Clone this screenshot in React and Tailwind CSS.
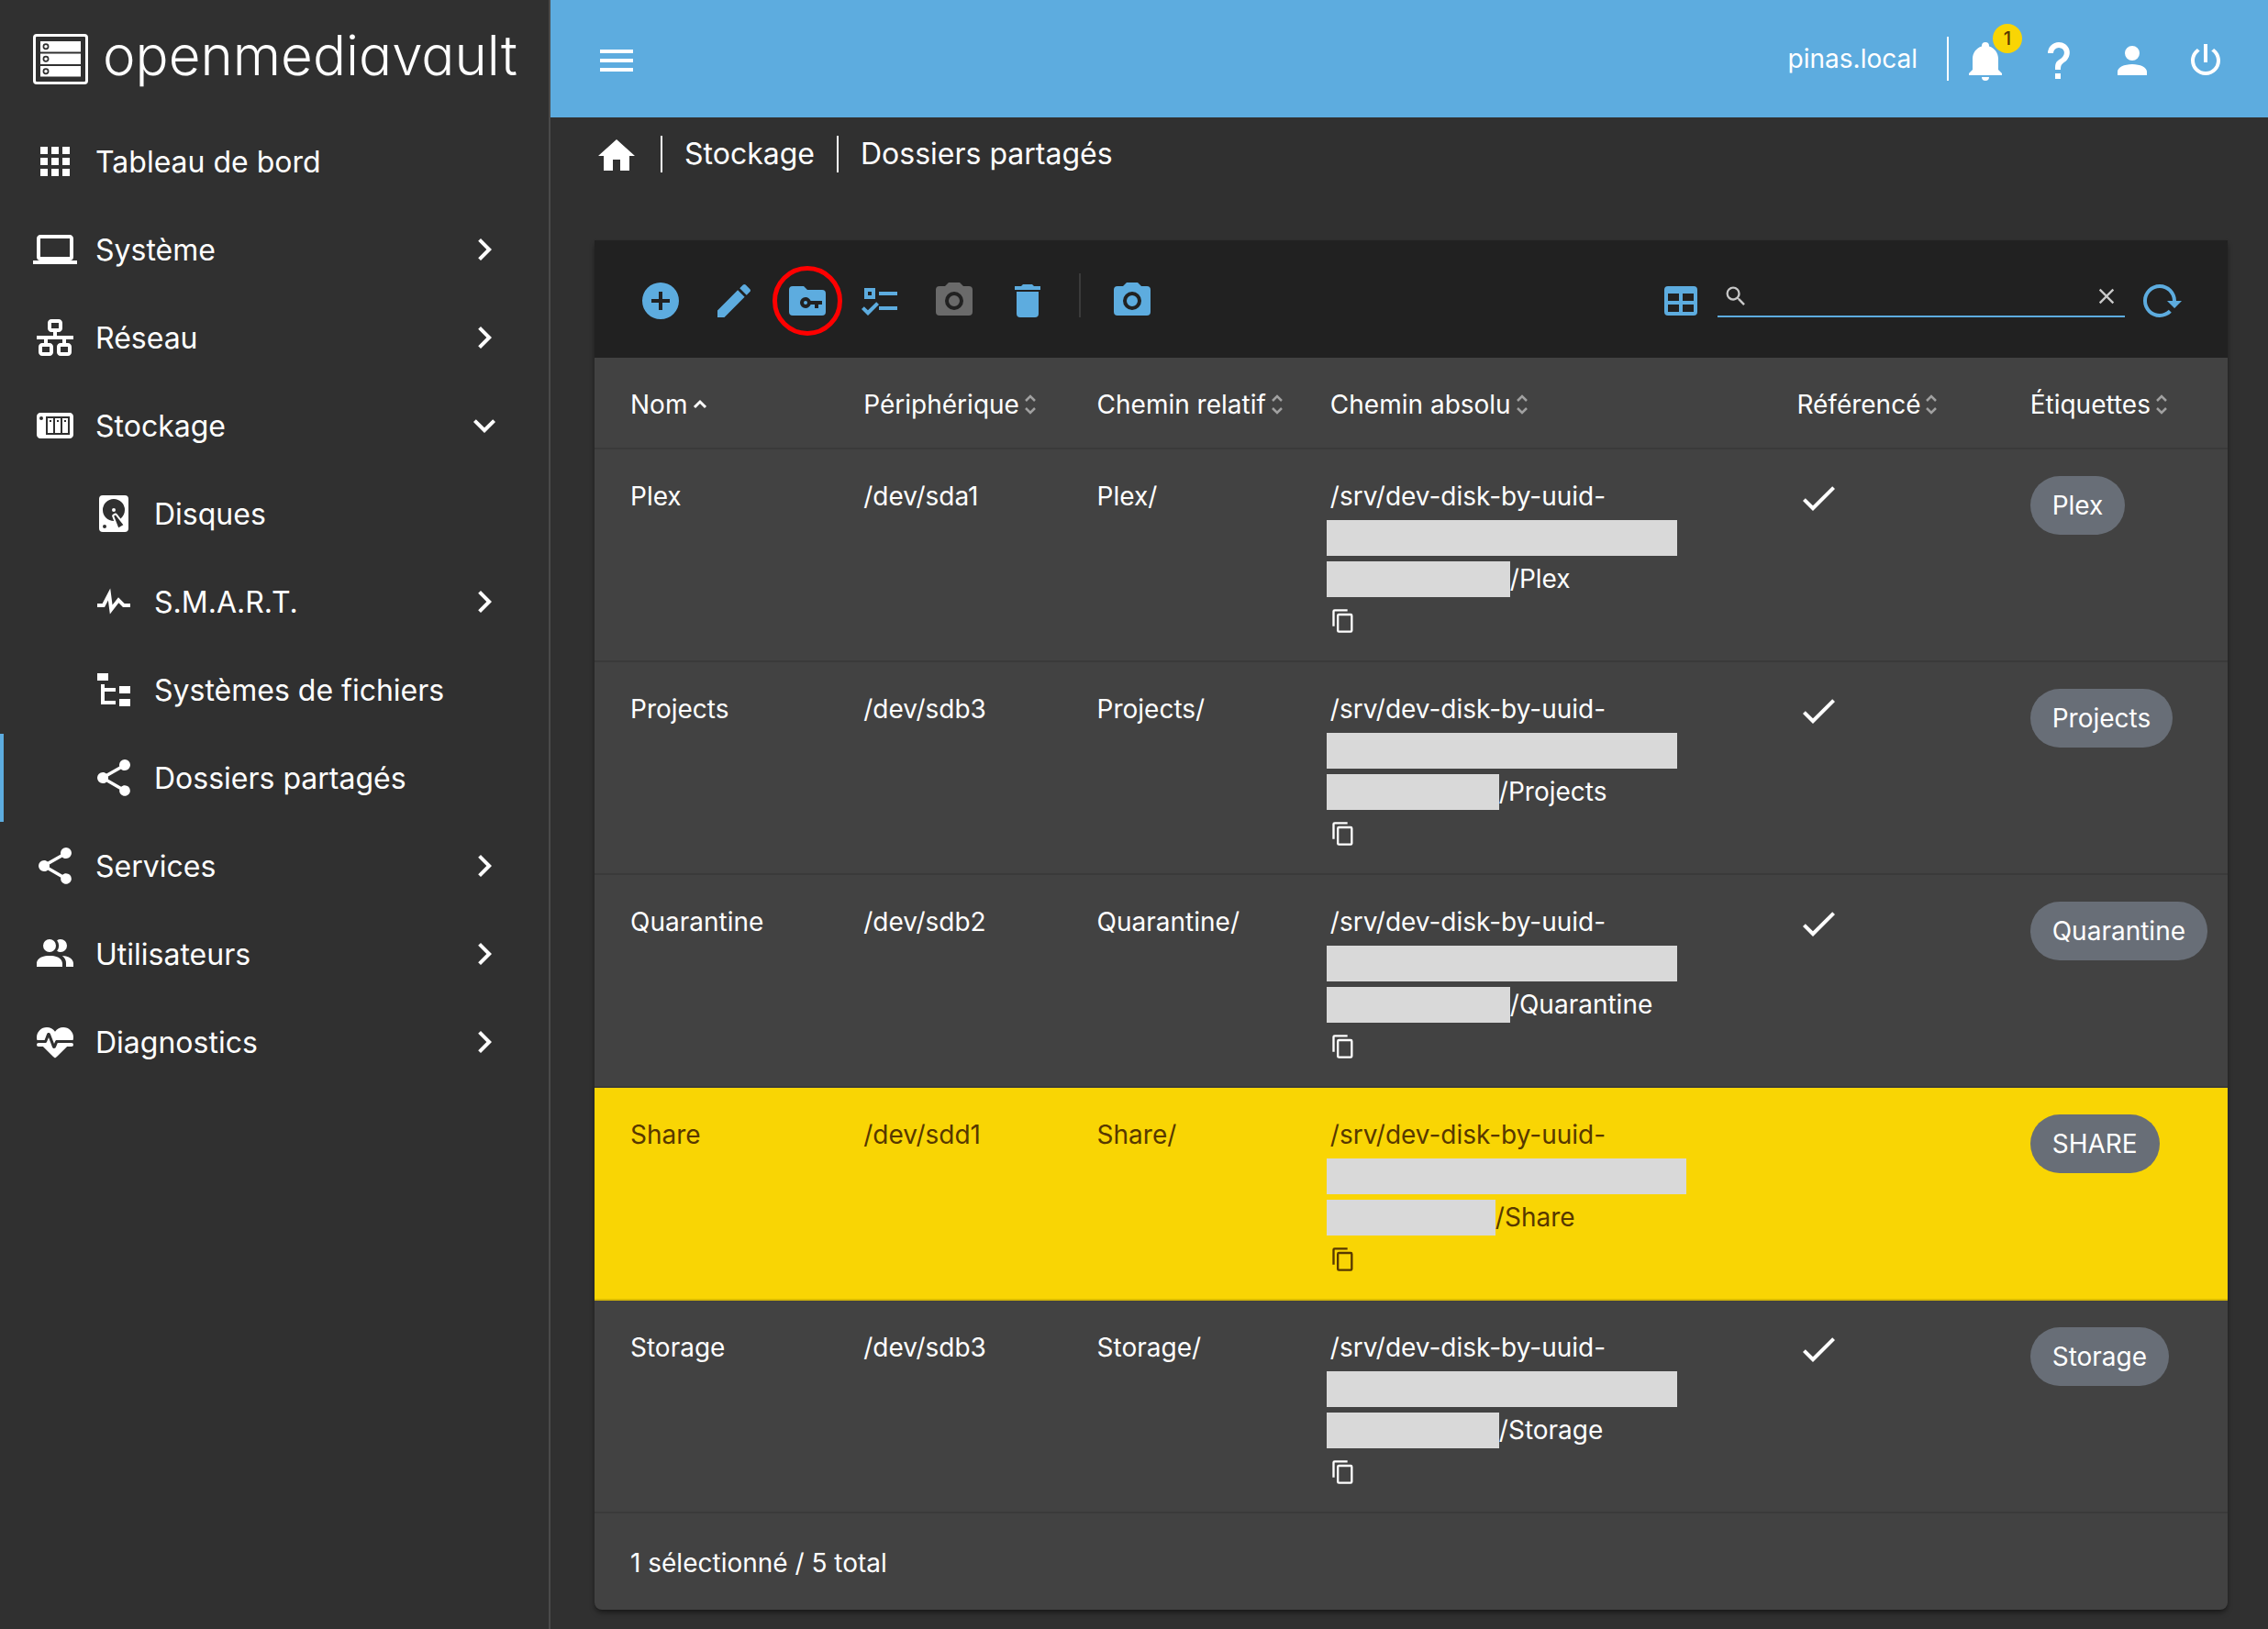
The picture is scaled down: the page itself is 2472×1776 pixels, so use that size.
import React, { useState } from 'react';

const icons = {
  apps: 'M16,20H20V16H16M16,14H20V10H16M10,8H14V4H10M16,8H20V4H16M10,14H14V10H10M4,14H8V10H4M4,20H8V16H4M10,20H14V16H10M4,8H8V4H4V8Z',
  laptop: 'M4,6H20V16H4M20,18A2,2 0 0,0 22,16V6C22,4.89 21.1,4 20,4H4C2.89,4 2,4.89 2,6V16A2,2 0 0,0 4,18H0V20H24V18H20Z',
  lan: 'M10,2C8.89,2 8,2.89 8,4V7C8,8.11 8.89,9 10,9H11V11H2V13H6V15H5C3.89,15 3,15.89 3,17V20C3,21.11 3.89,22 5,22H9C10.11,22 11,21.11 11,20V17C11,15.89 10.11,15 9,15H8V13H16V15H15C13.89,15 13,15.89 13,17V20C13,21.11 13.89,22 15,22H19C20.11,22 21,21.11 21,20V17C21,15.89 20.11,15 19,15H18V13H22V11H13V9H14C15.11,9 16,8.11 16,7V4C16,2.89 15.11,2 14,2H10M10,4H14V7H10V4M5,17H9V20H5V17M15,17H19V20H15V17Z',
  nas: 'M4,5C2.89,5 2,5.89 2,7V17C2,18.11 2.89,19 4,19H20C21.11,19 22,18.11 22,17V7C22,5.89 21.11,5 20,5H4M4.5,7A1,1 0 0,1 5.5,8A1,1 0 0,1 4.5,9A1,1 0 0,1 3.5,8A1,1 0 0,1 4.5,7M7,7H20V17H7V7M8,8V16H11V8H8M12,8V16H15V8H12M16,8V16H19V8H16M9,9H10V10H9V9M13,9H14V10H13V9M17,9H18V10H17V9Z',
  harddisk: 'M6,2H18A2,2 0 0,1 20,4V20A2,2 0 0,1 18,22H6A2,2 0 0,1 4,20V4A2,2 0 0,1 6,2M12,4A6,6 0 0,0 6,10C6,13.31 8.69,16 12.1,16L11.22,13.77C10.95,13.29 11.11,12.68 11.59,12.4L12.45,11.9C12.93,11.63 13.54,11.79 13.82,12.27L15.74,14.69C17.12,13.59 18,11.9 18,10A6,6 0 0,0 12,4M12,9A1,1 0 0,1 13,10A1,1 0 0,1 12,11A1,1 0 0,1 11,10A1,1 0 0,1 12,9M7,18A1,1 0 0,0 6,19A1,1 0 0,0 7,20A1,1 0 0,0 8,19A1,1 0 0,0 7,18M12.09,13.27L14.58,19.58L17.17,18.08L12.95,12.77L12.09,13.27Z',
  pulse: 'M3,13H5.79L10.1,4.79L11.28,13.75L14.5,9.66L17.83,13H21V15H17L14.67,12.67L9.92,18.73L8.94,11.31L7,15H3V13Z',
  fileTree: 'M3,3H9V7H3V3M15,10H21V14H15V10M15,17H21V21H15V17M13,13H7V18H13V20H5V9H7V11H13V13Z',
  share: 'M18,16.08C17.24,16.08 16.56,16.38 16.04,16.85L8.91,12.7C8.96,12.47 9,12.24 9,12C9,11.76 8.96,11.53 8.91,11.3L15.96,7.19C16.5,7.69 17.21,8 18,8A3,3 0 0,0 21,5A3,3 0 0,0 18,2A3,3 0 0,0 15,5C15,5.24 15.04,5.47 15.09,5.7L8.04,9.81C7.5,9.31 6.79,9 6,9A3,3 0 0,0 3,12A3,3 0 0,0 6,15C6.79,15 7.5,14.69 8.04,14.19L15.16,18.34C15.11,18.55 15.08,18.77 15.08,19C15.08,20.61 16.39,21.91 18,21.91C19.61,21.91 20.92,20.61 20.92,19A2.92,2.92 0 0,0 18,16.08Z',
  users: 'M16 17V19H2V17S2 13 9 13 16 17 16 17M12.5 7.5A3.5 3.5 0 1 0 9 11A3.5 3.5 0 0 0 12.5 7.5M15.94 13A5.32 5.32 0 0 1 18 17V19H22V17S22 13.37 15.94 13M15 4A3.39 3.39 0 0 0 13.07 4.59A5 5 0 0 1 13.07 10.41A3.39 3.39 0 0 0 15 11A3.5 3.5 0 0 0 15 4Z',
  heartPulse: 'M7.5,4A5.5,5.5 0 0,0 2,9.5C2,10 2.09,10.5 2.22,11H6.3L7.57,7.63C7.87,6.83 9.05,6.75 9.43,7.63L11.5,13L12.09,11.58C12.22,11.25 12.57,11 13,11H21.78C21.91,10.5 22,10 22,9.5A5.5,5.5 0 0,0 16.5,4C14.64,4 13,4.93 12,6.34C11,4.93 9.36,4 7.5,4V4M3,12.5A1,1 0 0,0 2,13.5A1,1 0 0,0 3,14.5H5.44L11,20C12,20.9 12,20.9 13,20L18.56,14.5H21A1,1 0 0,0 22,13.5A1,1 0 0,0 21,12.5H13.4L12.47,14.8C12.07,15.81 10.92,15.67 10.55,14.83L8.5,9.5L7.54,11.83C7.39,12.21 7.05,12.5 6.6,12.5H3Z',
  chevronRight: 'M8.59,16.58L13.17,12L8.59,7.41L10,6L16,12L10,18L8.59,16.58Z',
  chevronDown: 'M7.41,8.58L12,13.17L16.59,8.58L18,10L12,16L6,10L7.41,8.58Z',
  menu: 'M3,6H21V8H3V6M3,11H21V13H3V11M3,16H21V18H3V16Z',
  home: 'M10,20V14H14V20H19V12H22L12,3L2,12H5V20H10Z',
  bell: 'M21,19V20H3V19L5,17V11C5,7.9 7.03,5.17 10,4.29C10,4.19 10,4.1 10,4A2,2 0 0,1 12,2A2,2 0 0,1 14,4C14,4.1 14,4.19 14,4.29C16.97,5.17 19,7.9 19,11V17L21,19M14,21A2,2 0 0,1 12,23A2,2 0 0,1 10,21',
  help: 'M10,19H13V22H10V19M12,2C17.35,2.22 19.68,7.62 16.5,11.67C15.67,12.67 14.33,13.33 13.67,14.17C13,15 13,16 13,17H10C10,15.33 10,13.92 10.67,12.92C11.33,11.92 12.67,11.33 13.5,10.67C15.92,8.43 15.32,5.26 12,5A3,3 0 0,0 9,8H6A6,6 0 0,1 12,2Z',
  account: 'M12,4A4,4 0 0,1 16,8A4,4 0 0,1 12,12A4,4 0 0,1 8,8A4,4 0 0,1 12,4M12,14C16.42,14 20,15.79 20,18V20H4V18C4,15.79 7.58,14 12,14Z',
  power: 'M16.56,5.44L15.11,6.89C16.84,7.94 18,9.83 18,12A6,6 0 0,1 12,18A6,6 0 0,1 6,12C6,9.83 7.16,7.94 8.88,6.88L7.44,5.44C5.36,6.88 4,9.28 4,12A8,8 0 0,0 12,20A8,8 0 0,0 20,12C20,9.28 18.64,6.88 16.56,5.44M13,3H11V13H13',
  plus: 'M17,13H13V17H11V13H7V11H11V7H13V11H17M12,2A10,10 0 0,0 2,12A10,10 0 0,0 12,22A10,10 0 0,0 22,12A10,10 0 0,0 12,2Z',
  pencil: 'M20.71,7.04C21.1,6.65 21.1,6 20.71,5.63L18.37,3.29C18,2.9 17.35,2.9 16.96,3.29L15.12,5.12L18.87,8.87M3,17.25V21H6.75L17.81,9.93L14.06,6.18L3,17.25Z',
  folderKey: 'M20,6H12L10,4H4A2,2 0 0,0 2,6V18A2,2 0 0,0 4,20H20A2,2 0 0,0 22,18V8A2,2 0 0,0 20,6ZM20,14H18V16H16V14H13.82C13.4,15.16 12.3,16 11,16A3,3 0 0,1 11,10C12.3,10 13.4,10.84 13.82,12H20V14ZM11,12A1,1 0 0,0 11,14A1,1 0 0,0 11,12Z',
  listChecks: 'M3,5H9V11H3V5M5,7V9H7V7H5M11,7H21V9H11V7M11,15H21V17H11V15M5,20L1.5,16.5L2.91,15.09L5,17.17L9.59,12.59L11,14L5,20Z',
  camera: 'M4,4H7L9,2H15L17,4H20A2,2 0 0,1 22,6V18A2,2 0 0,1 20,20H4A2,2 0 0,1 2,18V6A2,2 0 0,1 4,4M12,7A5,5 0 0,0 7,12A5,5 0 0,0 12,17A5,5 0 0,0 17,12A5,5 0 0,0 12,7M12,9A3,3 0 0,1 15,12A3,3 0 0,1 12,15A3,3 0 0,1 9,12A3,3 0 0,1 12,9Z',
  trash: 'M19,4H15.5L14.5,3H9.5L8.5,4H5V6H19M6,19A2,2 0 0,0 8,21H16A2,2 0 0,0 18,19V7H6V19Z',
  table: 'M5,4H19A2,2 0 0,1 21,6V18A2,2 0 0,1 19,20H5A2,2 0 0,1 3,18V6A2,2 0 0,1 5,4M5,8V12H11V8H5M13,8V12H19V8H13M5,14V18H11V14H5M13,14V18H19V14H13Z',
  magnify: 'M9.5,3A6.5,6.5 0 0,1 16,9.5C16,11.11 15.41,12.59 14.44,13.73L14.71,14H15.5L20.5,19L19,20.5L14,15.5V14.71L13.73,14.44C12.59,15.41 11.11,16 9.5,16A6.5,6.5 0 0,1 3,9.5A6.5,6.5 0 0,1 9.5,3M9.5,5C7,5 5,7 5,9.5C5,12 7,14 9.5,14C12,14 14,12 14,9.5C14,7 12,5 9.5,5Z',
  close: 'M19,6.41L17.59,5L12,10.59L6.41,5L5,6.41L10.59,12L5,17.59L6.41,19L12,13.41L17.59,19L19,17.59L13.41,12L19,6.41Z',
  reload: 'M2 12C2 16.97 6.03 21 11 21C13.39 21 15.68 20.06 17.4 18.4L15.9 16.9C14.63 18.25 12.86 19 11 19C4.76 19 1.64 11.46 6.05 7.05C10.46 2.64 18 5.77 18 12H15L19 16H19.1L23 12H20C20 7.03 15.97 3 11 3C6.03 3 2 7.03 2 12Z',
  check: 'M21,7L9,19L3.5,13.5L4.91,12.09L9,16.17L19.59,5.59L21,7Z',
  copy: 'M19,21H8V7H19M19,5H8A2,2 0 0,0 6,7V21A2,2 0 0,0 8,23H19A2,2 0 0,0 21,21V7A2,2 0 0,0 19,5M16,1H4A2,2 0 0,0 2,3V17H4V3H16V1Z',
};

const menu = [
  { label: 'Tableau de bord', icon: 'apps' },
  { label: 'Système', icon: 'laptop', arrow: 'chevronRight' },
  { label: 'Réseau', icon: 'lan', arrow: 'chevronRight' },
  { label: 'Stockage', icon: 'nas', arrow: 'chevronDown' },
  { label: 'Disques', icon: 'harddisk', sub: true },
  { label: 'S.M.A.R.T.', icon: 'pulse', sub: true, arrow: 'chevronRight' },
  { label: 'Systèmes de fichiers', icon: 'fileTree', sub: true },
  { label: 'Dossiers partagés', icon: 'share', sub: true, active: true },
  { label: 'Services', icon: 'share', arrow: 'chevronRight' },
  { label: 'Utilisateurs', icon: 'users', arrow: 'chevronRight' },
  { label: 'Diagnostics', icon: 'heartPulse', arrow: 'chevronRight' },
];

const columns = ['Nom', 'Périphérique', 'Chemin relatif', 'Chemin absolu', 'Référencé', 'Étiquettes'];

// long / short: widths of the two masked parts of the uuid
const folders = [
  { name: 'Plex', device: '/dev/sda1', tag: 'Plex', referenced: true, long: 'w-[382px]', short: 'w-[200px]' },
  { name: 'Projects', device: '/dev/sdb3', tag: 'Projects', referenced: true, long: 'w-[382px]', short: 'w-[188px]' },
  { name: 'Quarantine', device: '/dev/sdb2', tag: 'Quarantine', referenced: true, long: 'w-[382px]', short: 'w-[200px]' },
  { name: 'Share', device: '/dev/sdd1', tag: 'SHARE', referenced: false, long: 'w-[392px]', short: 'w-[184px]' },
  { name: 'Storage', device: '/dev/sdb3', tag: 'Storage', referenced: true, long: 'w-[382px]', short: 'w-[188px]' },
];

const Icon = ({ name, className = 'size-12' }) => (
  <svg viewBox="0 0 24 24" fill="currentColor" fillRule="evenodd" aria-hidden="true" className={`shrink-0 ${className}`}>
    <path d={icons[name]} />
  </svg>
);

const IconButton = ({ icon, label, children, ...props }) => (
  <button type="button" aria-label={label} className="relative shrink-0 disabled:text-[#6a6a6a]" {...props}>
    <Icon name={icon} />
    {children}
  </button>
);

const Logo = () => (
  <div className="flex h-32 items-center gap-4 pl-9">
    <svg viewBox="0 0 60 55" className="h-[55px] w-[60px] shrink-0" aria-hidden="true">
      <rect x="1.5" y="1.5" width="57" height="52" rx="2.5" fill="none" stroke="#fff" strokeWidth="3" />
      {[8, 21.5, 35].map((y) => (
        <g key={y}>
          <rect x="8" y={y} width="44" height="11.5" fill="#fff" />
          <circle cx="14" cy={y + 5.75} r="2.6" fill="none" stroke="#303030" strokeWidth="1.7" />
        </g>
      ))}
    </svg>
    <span className="pb-2 text-[60px] leading-[60px] font-light [font-feature-settings:'cv11']">openmediavault</span>
  </div>
);

const Sidebar = () => (
  <aside className="w-[600px] shrink-0 border-r-2 border-[#4a4a4a]">
    <Logo />
    <nav>
      {menu.map((item) => (
        <a
          key={item.label}
          href="#"
          className={`flex h-24 items-center gap-5 border-l-4 pr-[46px] text-[32px] leading-10 ${
            item.sub ? 'pl-24' : 'pl-8'
          } ${item.active ? 'border-[#5dacdf]' : 'border-transparent'}`}
        >
          <Icon name={item.icon} />
          <span className="flex-1 pt-0.5">{item.label}</span>
          {item.arrow && <Icon name={item.arrow} />}
        </a>
      ))}
    </nav>
  </aside>
);

const Header = () => (
  <header className="flex h-32 items-center bg-[#5dacdf] pr-11 pl-12">
    <div className="mt-1 flex flex-1">
      <IconButton icon="menu" label="Menu" />
    </div>
    <span className="mr-8 text-[28px] leading-10">pinas.local</span>
    <span className="mr-4 h-12 w-0.5 bg-white" />
    <div className="mt-1 flex gap-8">
      <IconButton icon="bell" label="Notifications">
        <span className="absolute -top-4 -right-4 flex size-8 items-center justify-center rounded-full bg-[#f9d504] text-xl font-medium text-[#573800]">
          1
        </span>
      </IconButton>
      <IconButton icon="help" label="Aide" />
      <IconButton icon="account" label="Compte" />
      <IconButton icon="power" label="Arrêt" />
    </div>
  </header>
);

const Breadcrumb = () => (
  <nav className="flex h-12 items-center gap-6 text-[32px] leading-10">
    <a href="#" aria-label="Accueil" className="mt-1">
      <Icon name="home" />
    </a>
    <span className="h-10 w-0.5 bg-white" />
    <a href="#">Stockage</a>
    <span className="h-10 w-0.5 bg-white" />
    <a href="#">Dossiers partagés</a>
  </nav>
);

const Toolbar = () => {
  const [search, setSearch] = useState('');

  return (
    <div className="flex h-32 items-center justify-between bg-[#212121] px-12 pt-1 text-[#5dacdf]">
      <div className="flex items-center gap-8">
        <IconButton icon="plus" label="Créer" />
        <IconButton icon="pencil" label="Éditer" />
        <IconButton icon="folderKey" label="Permissions">
          <span className="absolute -inset-3.5 rounded-full border-[5px] border-[#ff0000]" />
        </IconButton>
        <IconButton icon="listChecks" label="ACL" />
        <IconButton icon="camera" label="Créer un instantané" disabled />
        <IconButton icon="trash" label="Supprimer" />
        <span className="mb-3 h-12 w-0.5 bg-[#3a3a3a]" />
        <IconButton icon="camera" label="Instantanés" />
      </div>
      <div className="flex items-center gap-4">
        <IconButton icon="table" label="Colonnes" />
        <div className="flex h-9 w-[444px] items-center border-b-2 border-[#5dacdf] px-1.5 pb-2 text-[#c8c8c8]">
          <Icon name="magnify" className="size-7" />
          <input
            type="text"
            aria-label="Rechercher"
            value={search}
            onChange={(e) => setSearch(e.target.value)}
            className="h-7 min-w-0 flex-1 px-2 text-[28px] outline-none"
          />
          <button type="button" aria-label="Effacer" onClick={() => setSearch('')}>
            <Icon name="close" className="size-7" />
          </button>
        </div>
        <IconButton icon="reload" label="Recharger" />
      </div>
    </div>
  );
};

const SortIcon = ({ sorted }) =>
  sorted ? (
    <svg viewBox="0 0 16 22" fill="none" stroke="currentColor" strokeWidth="3" className="h-[22px] w-4" aria-hidden="true">
      <path d="M2,14L8,8L14,14" />
    </svg>
  ) : (
    <svg viewBox="0 0 12 22" fill="none" stroke="#a0a0a0" strokeWidth="2.5" className="h-[22px] w-3" aria-hidden="true">
      <path d="M1,7L6,2L11,7M1,15L6,20L11,15" />
    </svg>
  );

const FolderRow = ({ folder, selected, onSelect }) => (
  <tr
    onClick={onSelect}
    className={`align-top [&>td]:border-b-2 [&>td]:border-black/12 [&>td]:pt-[29px] [&>td]:pb-[21px] [&>td]:pl-[39px] ${
      selected ? 'bg-[#f9d504] text-[#573800]' : ''
    }`}
  >
    <td>{folder.name}</td>
    <td>{folder.device}</td>
    <td>{folder.name}/</td>
    <td>
      <div>/srv/dev-disk-by-uuid-</div>
      <div className="-ml-1 flex h-[45px] items-center">
        <span className={`h-[39px] bg-[#d9d9d9] ${folder.long}`} />
      </div>
      <div className="-ml-1 flex h-[45px] items-center">
        <span className={`h-[39px] bg-[#d9d9d9] ${folder.short}`} />
        /{folder.name}
      </div>
      <button type="button" aria-label="Copier" className="flex h-[45px] items-center">
        <Icon name="copy" className="size-7" />
      </button>
    </td>
    <td>{folder.referenced && <Icon name="check" />}</td>
    <td>
      <span className="inline-flex h-16 items-center rounded-full bg-[#686e77] px-6 text-white">{folder.tag}</span>
    </td>
  </tr>
);

const App = () => {
  const [selected, setSelected] = useState('Share');

  return (
    <div className="flex min-h-screen bg-[#303030] font-['Inter',sans-serif] text-white">
      <Sidebar />
      <div className="min-w-0 flex-1">
        <Header />
        <main className="pt-4 pr-11 pb-5 pl-12">
          <Breadcrumb />
          <section className="mt-[70px] overflow-hidden rounded-b-lg bg-[#424242] shadow-md shadow-black/40">
            <Toolbar />
            <table className="w-full table-fixed border-separate border-spacing-0 text-[28px] leading-[45px]">
              <colgroup>
                {columns.map((column) => (
                  <col key={column} className={column === 'Chemin absolu' ? 'w-2/7' : ''} />
                ))}
              </colgroup>
              <thead>
                <tr>
                  {columns.map((column) => (
                    <th key={column} className="h-[100px] border-b-2 border-black/12 pt-1 pl-[39px] text-left font-normal whitespace-nowrap">
                      <span className="flex items-center gap-1.5">
                        {column}
                        <SortIcon sorted={column === 'Nom'} />
                      </span>
                    </th>
                  ))}
                </tr>
              </thead>
              <tbody>
                {folders.map((folder) => (
                  <FolderRow
                    key={folder.name}
                    folder={folder}
                    selected={folder.name === selected}
                    onSelect={() => setSelected(folder.name)}
                  />
                ))}
              </tbody>
            </table>
            <footer className="flex h-[105px] items-center px-[39px] pt-1 text-[28px] leading-[45px]">
              1 sélectionné / {folders.length} total
            </footer>
          </section>
        </main>
      </div>
    </div>
  );
};

export default App;
